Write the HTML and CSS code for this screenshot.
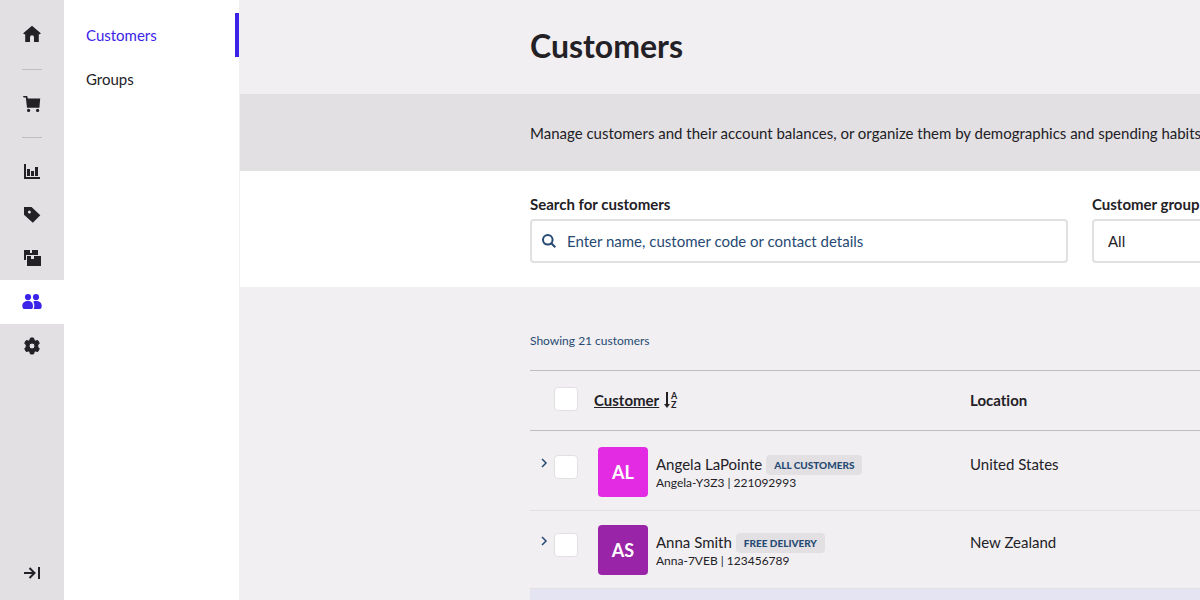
FILE: index.html
```html
<!DOCTYPE html>
<html lang="en">
<head>
    <meta charset="UTF-8">
    <meta name="viewport" content="width=device-width, initial-scale=1.0">
    <title>Customers</title>
    <link rel="stylesheet" href="styles.css">
</head>

<body>
    <!-- Icon sidebar -->
    <nav class="sidebar" aria-label="Main">
        <a class="side-link" href="#" aria-label="Home">
            <svg width="20" height="20" viewBox="0 0 20 20"><path d="M10 1.8 18.8 9.2 18 10.2H16.8V18H12V13.2a2 2 0 0 0-4 0V18H3.2V10.2H2L1.2 9.2Z"/></svg>
        </a>
        <hr class="divider">
        <a class="side-link" href="#" aria-label="Sell">
            <svg width="20" height="20" viewBox="0 0 20 20"><path d="M1 2H5.2L5.8 4.6H18.2L17.4 13.8H5L3.8 3.6H1.6Z"/><circle cx="6.6" cy="16.4" r="1.6"/><circle cx="15.6" cy="16.4" r="1.6"/></svg>
        </a>
        <hr class="divider divider-tight">
        <a class="side-link" href="#" aria-label="Reporting">
            <svg width="20" height="20" viewBox="0 0 20 20"><path d="M2 4H4V17H18V19H2ZM5 9H8V16H5ZM9 11H12V16H9ZM13 7H16V16H13Z"/></svg>
        </a>
        <a class="side-link" href="#" aria-label="Catalog">
            <svg width="20" height="20" viewBox="0 0 20 20"><path fill-rule="evenodd" d="M2 3H9.5L18.3 11.2 10.8 18.8 2 10.8ZM7.4 6.6a1.5 1.5 0 1 0 0 3 1.5 1.5 0 0 0 0-3Z"/></svg>
        </a>
        <a class="side-link" href="#" aria-label="Inventory">
            <svg width="20" height="20" viewBox="0 0 20 20"><path d="M2 2H8V5H10V2H16V7H4V12H2ZM5 8H9V11H12V8H19V18H5Z"/></svg>
        </a>
        <a class="side-link active" href="#" aria-label="Customers">
            <svg width="20" height="20" viewBox="0 0 20 20"><circle cx="6" cy="5.1" r="3.1"/><circle cx="14" cy="5.1" r="3.1"/><path d="M.3 14C.3 10.5 2.8 9 6 9s5 1.5 5 5c0 1.6-.3 2.5-1.2 3H1.8C.8 16.3.3 15.5.3 14ZM11.2 9.7C12.2 9.1 13 9 14 9c3.5 0 5.7 1.6 5.7 5 0 1.5-.4 2.5-1.5 3h-6.7c.6-1 .8-1.8.8-3.2 0-1.7-.3-3-1.1-4.1Z"/></svg>
        </a>
        <a class="side-link" href="#" aria-label="Setup">
            <svg width="20" height="20" viewBox="0 0 20 20"><path class="gear" fill-rule="evenodd" d="M8.5 2h3l.7 2.2 1.3.8 2.3-.5 1.5 2.700-1.500 1.700v2.200l1.500 1.700-1.500 2.700-2.300-.5-1.300.8-.7 2.200h-3l-.7-2.200-1.300-.8-2.300.5-1.500-2.700 1.500-1.700V8.900L2.700 7.200 4.200 4.500l2.300.5 1.300-.8ZM10 7a3 3 0 1 0 0 6 3 3 0 0 0 0-6Z"/></svg>
        </a>
        <button class="side-link collapse" type="button" aria-label="Expand menu">
            <svg class="line-icon" width="20" height="20" viewBox="0 0 20 20"><path d="M2 10H12.5M7.5 5 12.5 10 7.5 15M17 4V16"/></svg>
        </button>
    </nav>

    <!-- Section menu -->
    <nav class="submenu" aria-label="Customers">
        <a class="submenu-link current" href="#">Customers</a>
        <a class="submenu-link" href="#">Groups</a>
    </nav>

    <main class="main">
        <header class="page-header">
            <h1 class="title">Customers</h1>
        </header>

        <section class="intro">
            <p class="intro-text">Manage customers and their account balances, or organize them by demographics and spending habits.</p>
        </section>

        <form class="filters">
            <div class="field">
                <label class="label" for="search">Search for customers</label>
                <div class="search-box">
                    <svg class="line-icon" width="16" height="16" viewBox="0 0 16 16"><circle cx="6.8" cy="6.8" r="4.8"/><path d="M10.3 10.3 14.3 14.3"/></svg>
                    <input class="search-input" id="search" type="text" placeholder="Enter name, customer code or contact details">
                </div>
            </div>
            <div class="field">
                <label class="label" for="group">Customer group</label>
                <select class="select" id="group">
                    <option>All</option>
                </select>
            </div>
        </form>

        <section class="results">
            <p class="count">Showing 21 customers</p>
            <table class="table">
                <thead>
                    <tr>
                        <th class="col-toggle"></th>
                        <th class="col-check"><input class="checkbox" type="checkbox" aria-label="Select all"></th>
                        <th class="col-customer">
                            <button class="sort" type="button"><span class="sort-text">Customer</span>
                                <svg width="16" height="18" viewBox="0 0 16 18"><path d="M3 1H5V13H7L4 17 1 13H3Z"/><text class="sort-letter" x="8" y="8">A</text><text class="sort-letter" x="8" y="17">Z</text></svg>
                            </button>
                        </th>
                        <th>Location</th>
                    </tr>
                </thead>
                <tbody>
                    <tr>
                        <td class="col-toggle"><button class="toggle" type="button" aria-label="Show details"><svg class="line-icon" width="8" height="10" viewBox="0 0 8 10"><path d="M2 1 6 5 2 9"/></svg></button></td>
                        <td class="col-check"><input class="checkbox" type="checkbox" aria-label="Select Angela LaPointe"></td>
                        <td class="col-customer">
                            <div class="customer">
                                <div class="avatar avatar-pink">AL</div>
                                <div class="details">
                                    <div class="name">Angela LaPointe <span class="badge">All customers</span></div>
                                    <div class="code">Angela-Y3Z3 | 221092993</div>
                                </div>
                            </div>
                        </td>
                        <td class="location">United States</td>
                    </tr>
                    <tr>
                        <td class="col-toggle"><button class="toggle" type="button" aria-label="Show details"><svg class="line-icon" width="8" height="10" viewBox="0 0 8 10"><path d="M2 1 6 5 2 9"/></svg></button></td>
                        <td class="col-check"><input class="checkbox" type="checkbox" aria-label="Select Anna Smith"></td>
                        <td class="col-customer">
                            <div class="customer">
                                <div class="avatar avatar-purple">AS</div>
                                <div class="details">
                                    <div class="name">Anna Smith <span class="badge">Free delivery</span></div>
                                    <div class="code">Anna-7VEB | 123456789</div>
                                </div>
                            </div>
                        </td>
                        <td class="location">New Zealand</td>
                    </tr>
                    <tr class="highlight">
                        <td colspan="4"></td>
                    </tr>
                </tbody>
            </table>
        </section>
    </main>
</body>
</html>
```
FILE: styles.css
```css
* {
    box-sizing: border-box;
}
body {
    display: flex;
    height: 100vh;
    margin: 0;
    overflow: hidden;
    font-family: Lato, sans-serif;
    font-size: 15px;
    font-variant-ligatures: none;
    line-height: 20px;
    color: #232126;
    background: #f1eff2;
}
h1, p {
    margin: 0;
}
button, input, select {
    font: inherit;
    color: inherit;
}
button {
    padding: 0;
    border: none;
    background: none;
    cursor: pointer;
}
svg {
    display: block;
    fill: currentColor;
}
.line-icon {
    fill: none;
    stroke: currentColor;
    stroke-width: 2;
}

/* Icon sidebar */
.sidebar {
    display: flex;
    flex-direction: column;
    flex: none;
    width: 64px;
    padding: 12px 0 5px;
    background: #e2e0e3;
}
.side-link {
    display: flex;
    justify-content: center;
    align-items: center;
    flex: none;
    width: 100%;
    height: 44px;
    color: #232126;
}
.side-link.active {
    color: #3b24e8;
    background: #fff;
}
.gear {
    stroke: currentColor;
    stroke-width: 1;
    stroke-linejoin: round;
}
.divider {
    width: 20px;
    height: 1px;
    margin: 13px auto 12px;
    border: none;
    background: #bfbdc1;
}
.divider-tight {
    margin: 11px auto 10px;
}
.collapse {
    margin-top: auto;
}

/* Section menu */
.submenu {
    flex: none;
    width: 176px;
    padding-top: 13px;
    border-right: 1px solid #f1eff2;
    background: #fff;
}
.submenu-link {
    display: block;
    padding: 12px 22px;
    color: #232126;
    text-decoration: none;
}
.submenu-link.current {
    border-right: 4px solid #3b24e8;
    color: #3b24e8;
}

/* Page */
.main {
    flex: 1;
    min-width: 0;
    overflow: hidden;
}
.page-header, .intro, .filters, .results {
    min-width: 1280px;
    padding-left: 290px;
}
.page-header {
    padding-top: 26px;
    padding-bottom: 28px;
}
.title {
    font-size: 32px;
    line-height: 40px;
}
.intro {
    padding-top: 29px;
    padding-bottom: 28px;
    background: #e2e0e3;
}
.filters {
    display: grid;
    grid-template-columns: 538px 1fr;
    gap: 24px;
    padding-top: 23px;
    padding-bottom: 24px;
    background: #fff;
}
.label {
    display: block;
    margin-bottom: 5px;
    font-weight: bold;
}
.search-box {
    display: flex;
    align-items: center;
    gap: 10px;
    height: 44px;
    padding: 0 9px;
    border: 2px solid #e2e0e3;
    border-radius: 4px;
    color: #274a73;
}
.search-input {
    flex: 1;
    padding: 0;
    border: none;
    outline: none;
    background: none;
}
.search-input::placeholder {
    color: #274a73;
    opacity: 1;
}
.select {
    width: 100%;
    height: 44px;
    padding: 0 14px;
    border: 2px solid #e2e0e3;
    border-radius: 4px;
    background: #fff;
    appearance: none;
}

/* Customer list */
.results {
    padding-top: 44px;
}
.count {
    margin-bottom: 19px;
    font-size: 12px;
    color: #274a73;
}
.table {
    width: 100%;
    border-spacing: 0;
    table-layout: fixed;
}
.table th {
    height: 61px;
    padding: 0 0 2px;
    border-top: 1px solid #bfbdc1;
    border-bottom: 1px solid #bfbdc1;
    text-align: left;
}
.table td {
    padding: 14px 0 13px;
    border-bottom: 1px solid #e2e0e3;
    vertical-align: top;
}
.table tbody tr:first-child td {
    padding-top: 16px;
}
.table .col-toggle {
    width: 24px;
}
.table .col-check {
    width: 40px;
}
.table th.col-check {
    padding-bottom: 4px;
}
.table .col-customer {
    width: 376px;
}
.checkbox {
    display: block;
    width: 24px;
    height: 24px;
    margin: 0;
    border: 1px solid #e2e0e3;
    border-radius: 4px;
    background: #fff;
    appearance: none;
}
td .checkbox {
    margin-top: 8px;
}
.sort {
    display: flex;
    align-items: center;
    gap: 4px;
    font-weight: bold;
}
.sort-text {
    text-decoration: underline;
}
.sort-letter {
    font-size: 9px;
    font-weight: bold;
}
.toggle {
    display: block;
    margin: 11px 0 0 10px;
    color: #274a73;
}
.toggle .line-icon {
    stroke-width: 1.5;
}
.customer {
    display: flex;
    gap: 8px;
    padding-left: 4px;
}
.avatar {
    display: flex;
    justify-content: center;
    align-items: center;
    width: 50px;
    height: 50px;
    border-radius: 4px;
    font-size: 18px;
    font-weight: bold;
    color: #fff;
}
.avatar-pink {
    background: #e22be2;
}
.avatar-purple {
    background: #9a24a8;
}
.details {
    padding-top: 8px;
}
.name {
    display: flex;
    align-items: flex-start;
    gap: 4px;
    line-height: 18px;
}
.badge {
    padding: 0 8px;
    border-radius: 4px;
    font-size: 10px;
    font-weight: 900;
    line-height: 20px;
    text-transform: uppercase;
    color: #274a73;
    background: #e2e0e3;
}
.code {
    font-size: 12px;
    line-height: 16px;
}
.table .location {
    padding-top: 21px;
}
.table tbody tr:first-child .location {
    padding-top: 23px;
}
.highlight {
    background: #e5e4f2;
}
.highlight td {
    height: 78px;
}
```
